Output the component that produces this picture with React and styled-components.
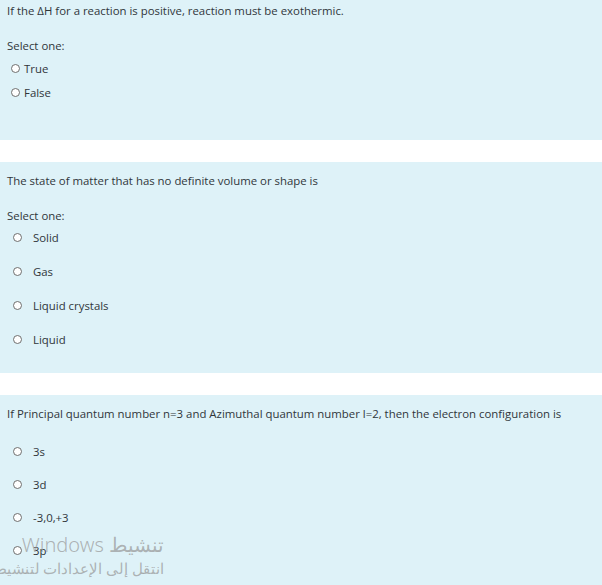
import styled, { createGlobalStyle } from "styled-components";

const GlobalStyle = createGlobalStyle`
  html, body {
    margin: 0;
    padding: 0;
    background: #ffffff;
    overflow: hidden;
  }
  body {
    font-family: "Open Sans", "Noto Sans", sans-serif;
    color: #30363b;
  }
`;

const Page = styled.div`
  position: relative;
  width: 602px;
  height: 585px;
  overflow: hidden;
`;

const Scroller = styled.div`
  display: flex;
  flex-direction: column;
  gap: 22px;
  margin-top: -8px;
`;

const Card = styled.div`
  background: #def2f8;
  padding: 11px 7px ${({ $bottom }) => $bottom}px 7px;
  display: flex;
  flex-direction: column;
`;

const QText = styled.div`
  font-size: 11.4px;
  line-height: 16px;
  white-space: nowrap;
`;

const SelectOne = styled.div`
  font-size: 11.4px;
  line-height: 16px;
  margin-top: 19px;
`;

const Options = styled.div`
  display: flex;
  flex-direction: column;
  gap: ${({ $gap }) => $gap}px;
  margin-top: ${({ $top }) => $top}px;
  padding-left: ${({ $indent }) => $indent}px;
`;

const Option = styled.label`
  display: flex;
  align-items: center;
  height: 20px;
  gap: ${({ $gap }) => $gap}px;
  font-size: 11.4px;
`;

const Radio = styled.span`
  width: 7px;
  height: 7px;
  border-radius: 50%;
  border: 1.5px solid #6f6f6f;
  background: #ffffff;
  flex: none;
`;

const Watermark = styled.div`
  position: absolute;
  left: 0;
  top: 532px;
  width: 164px;
  overflow: hidden;
  direction: rtl;
  text-align: right;
  white-space: nowrap;
  color: rgba(150, 150, 150, 0.7);
  font-family: "Noto Sans", "DejaVu Sans", sans-serif;
  font-weight: 300;
  pointer-events: none;
`;

const WmTitle = styled.div`
  font-size: 20px;
  line-height: 25px;
`;

const WmSub = styled.div`
  font-size: 14.5px;
  line-height: 22px;
`;

const questions = [
  {
    text: "If the \u0394H for a reaction is positive, reaction must be exothermic.",
    select: true,
    options: ["True", "False"],
    top: 4,
    gap: 4,
    indent: 4,
    labelGap: 4,
    bottom: 38,
  },
  {
    text: "The state of matter that has no definite volume or shape is",
    select: true,
    options: ["Solid", "Gas", "Liquid crystals", "Liquid"],
    top: 3,
    gap: 14,
    indent: 6,
    labelGap: 11,
    bottom: 24,
  },
  {
    text:
      "If Principal quantum number n=3 and Azimuthal quantum number l=2, then the electron configuration is",
    select: false,
    options: ["3s", "3d", "-3,0,+3", "3p"],
    top: 19,
    gap: 13,
    indent: 6,
    labelGap: 11,
    bottom: 30,
  },
];

export default function App() {
  return (
    <Page>
      <GlobalStyle />
      <Scroller>
        {questions.map((q, i) => (
          <Card key={i} $bottom={q.bottom}>
            <QText>{q.text}</QText>
            {q.select && <SelectOne>Select one:</SelectOne>}
            <Options $top={q.top} $gap={q.gap} $indent={q.indent}>
              {q.options.map((o) => (
                <Option key={o} $gap={q.labelGap}>
                  <Radio />
                  <span>{o}</span>
                </Option>
              ))}
            </Options>
          </Card>
        ))}
      </Scroller>
      <Watermark>
        <WmTitle>تنشيط Windows</WmTitle>
        <WmSub>انتقل إلى الإعدادات لتنشيط Windows.</WmSub>
      </Watermark>
    </Page>
  );
}
